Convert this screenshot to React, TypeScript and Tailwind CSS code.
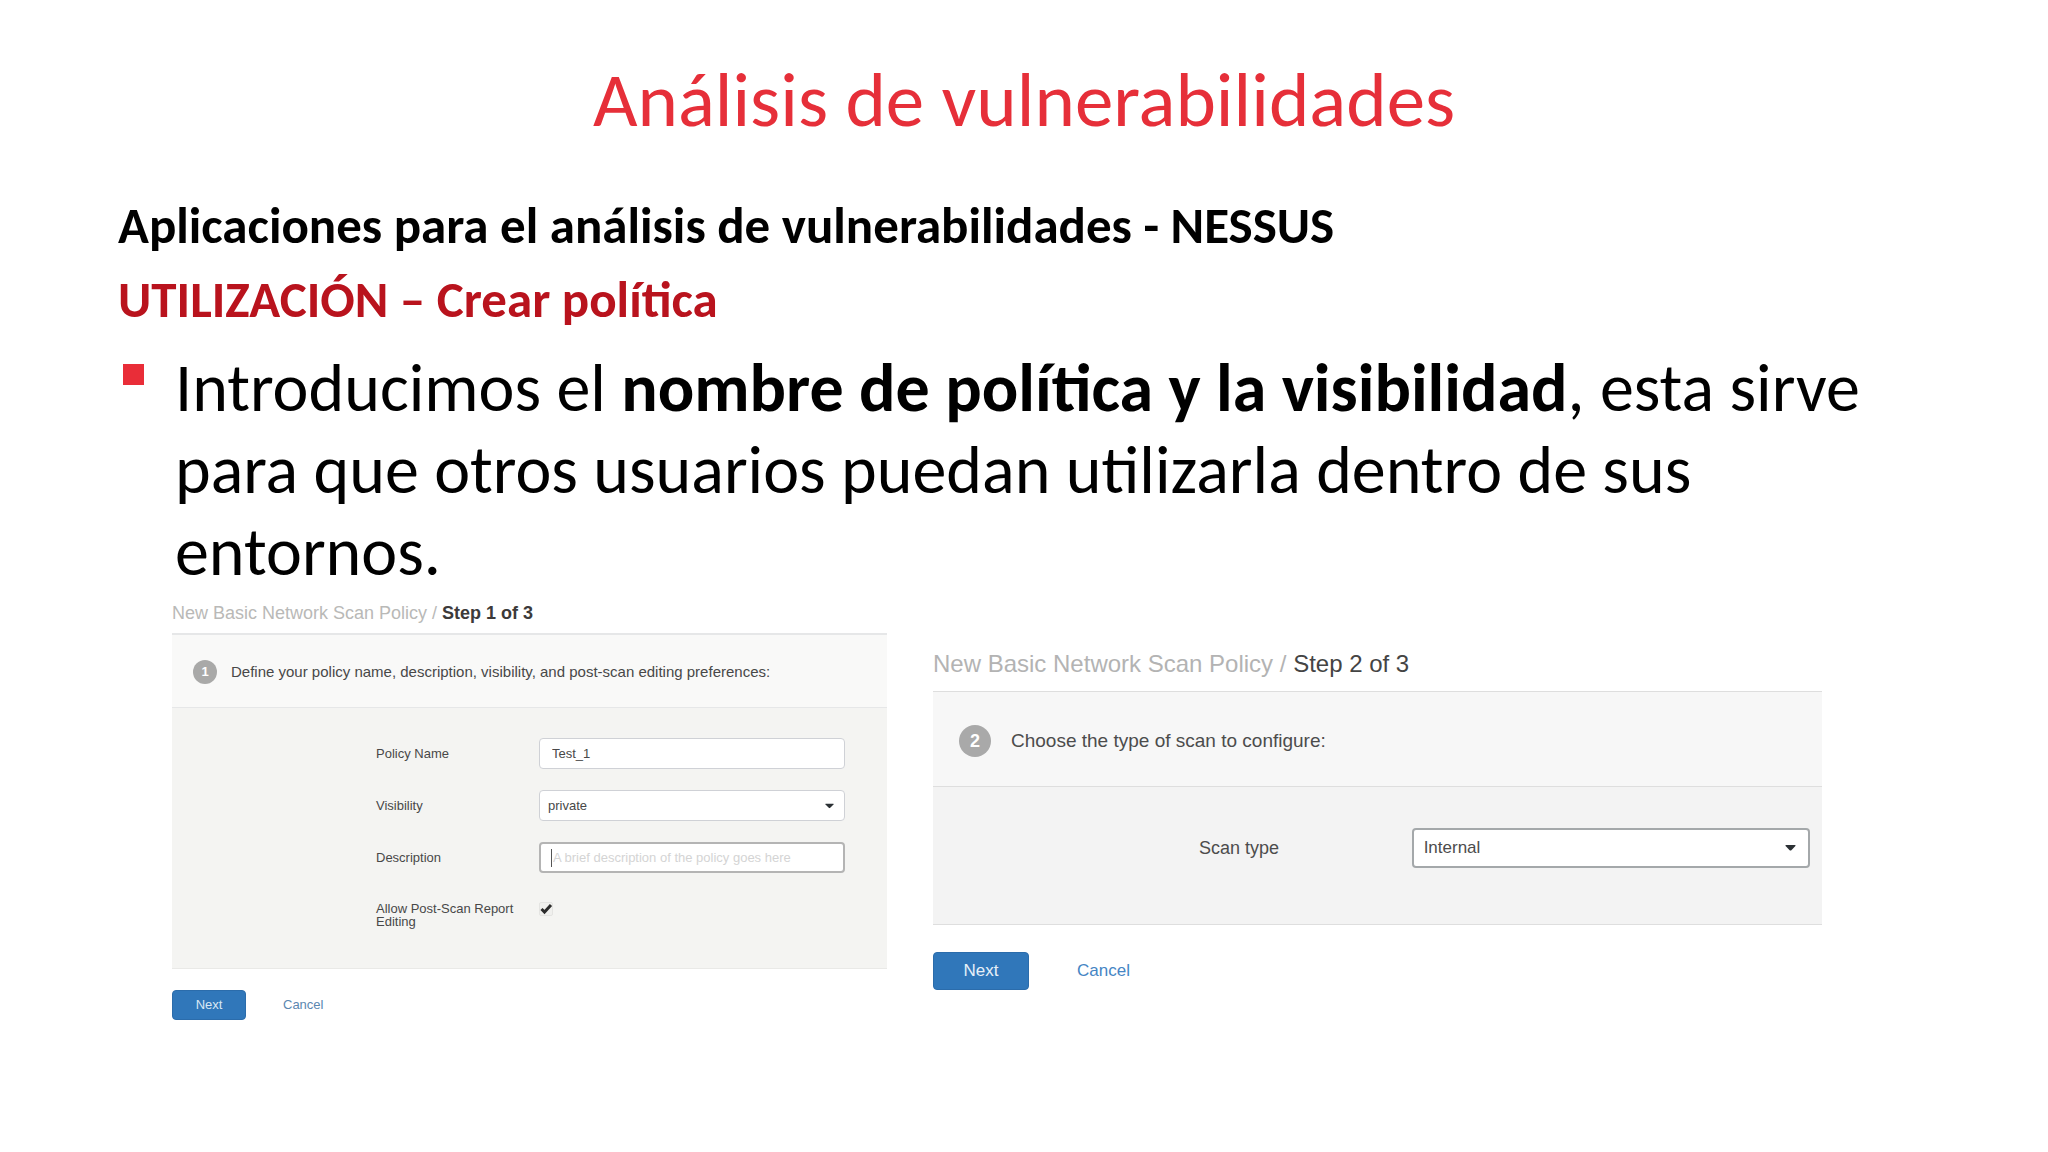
import type { ReactNode } from 'react';

interface PolicyPanelProps {
  step: number;
  heading: ReactNode;
  className: string;
  children: ReactNode;
}

const Caret = ({ className }: { className: string }) => (
  <svg viewBox="0 0 12 7" className={`pointer-events-none absolute top-1/2 -translate-y-1/2 ${className}`} aria-hidden="true">
    <path d="M0 1Q0 0 1 0H11Q12 0 12 1L7 6Q6 7 5 6Z" fill="#2b3034" />
  </svg>
);

const PolicyPanel = ({ step, heading, className, children }: PolicyPanelProps) => (
  <form className={className} onSubmit={(e) => e.preventDefault()} aria-label={`Step ${step} of 3`}>
    {heading}
    {children}
  </form>
);

const StepOne = () => (
  <PolicyPanel
    step={1}
    className="text-[13px] text-[#484848]"
    heading={
      <h2 className="h-[34px] pt-1 text-[18px] leading-5 whitespace-nowrap text-[#b9b9b7]">
        New Basic Network Scan Policy / <span className="font-bold text-[#3c3a3a]">Step 1 of 3</span>
      </h2>
    }
  >
    <div className="flex h-[75px] items-center gap-[14px] border-y border-t-2 border-[#e6e7e8] bg-[#f9f9f8] pt-[2px] pl-[21px]">
      <span className="flex size-6 items-center justify-center rounded-full bg-[#a9a9a8] text-[13px] font-bold text-white">1</span>
      <p className="text-[15px] whitespace-nowrap">Define your policy name, description, visibility, and post-scan editing preferences:</p>
    </div>
    <div className="grid grid-cols-[163fr_306fr] items-center gap-y-[21px] border-b border-[#e9e9e7] bg-[#f4f4f2] pt-[30px] pr-[42px] pb-10 pl-[204px]">
      <label htmlFor="policy-name">Policy Name</label>
      <input id="policy-name" type="text" defaultValue="Test_1" className="h-[31px] w-full rounded-sm border border-[#cfd1d6] bg-white px-3 outline-none" />

      <label htmlFor="visibility">Visibility</label>
      <div className="relative">
        <select id="visibility" defaultValue="private" className="block h-[31px] w-full appearance-none rounded-sm border border-[#cfd1d6] bg-white px-2 outline-none">
          <option value="private">private</option>
          <option value="shared">shared</option>
        </select>
        <Caret className="right-[11px] h-[5px] w-[9px]" />
      </div>

      <label htmlFor="description">Description</label>
      <div className="relative">
        <input
          id="description"
          type="text"
          placeholder="A brief description of the policy goes here"
          className="block h-[31px] w-full rounded-sm border-2 border-[#b4b4b4] bg-white px-3 outline-none placeholder:text-[#d4d4d4]"
        />
        <span className="absolute top-[7px] left-3 h-[18px] w-px bg-[#555]" />
      </div>

      <label htmlFor="post-scan" className="self-start pt-2 leading-[13px]">
        Allow Post-Scan Report
        <br />
        Editing
      </label>
      <div className="relative mt-2 size-[14px] self-start">
        <input id="post-scan" type="checkbox" defaultChecked className="block size-[14px] appearance-none rounded-xs border border-[#e4e4e2] bg-[#f0f0ee]" />
        <svg viewBox="0 0 14 14" className="pointer-events-none absolute inset-0 size-[14px]" aria-hidden="true">
          <path d="M2.5 7L5.5 10L12 3" fill="none" stroke="#2c2c2c" strokeWidth="3" />
        </svg>
      </div>
    </div>
    <div className="mt-[21px] flex items-center gap-[37px]">
      <button type="submit" className="h-[30px] w-[74px] rounded-sm border border-[#2b6cab] bg-[#3077ba] text-[#d9e7f4]">Next</button>
      <a href="#cancel" className="text-[#5b87b0]">Cancel</a>
    </div>
  </PolicyPanel>
);

const StepTwo = () => (
  <PolicyPanel
    step={2}
    className="mt-[51px] text-[17px] text-[#4c4c4c]"
    heading={
      <h2 className="h-[41px] text-[24px] leading-7 whitespace-nowrap text-[#b3b3b3]">
        New Basic Network Scan Policy / <span className="text-[#444]">Step 2 of 3</span>
      </h2>
    }
  >
    <div className="flex h-[96px] items-center gap-5 border-y border-[#dedede] bg-[#f7f7f7] pt-1 pl-[26px]">
      <span className="flex size-8 items-center justify-center rounded-full bg-[#a9a9a9] text-[18px] font-bold text-white">2</span>
      <p className="text-[19px] whitespace-nowrap">Choose the type of scan to configure:</p>
    </div>
    <div className="grid grid-cols-[213fr_399fr] items-center border-b border-[#dedede] bg-[#f3f3f3] pt-[41px] pr-[12px] pb-[56px] pl-[266px]">
      <label htmlFor="scan-type" className="text-[18px]">Scan type</label>
      <div className="relative">
        <select id="scan-type" defaultValue="internal" className="block h-10 w-full appearance-none rounded-sm border-2 border-[#a4a8aa] bg-white px-[10px] outline-none">
          <option value="internal">Internal</option>
          <option value="external">External</option>
        </select>
        <Caret className="right-[14px] h-[6px] w-[11px]" />
      </div>
    </div>
    <div className="mt-[27px] flex items-center gap-[48px]">
      <button type="submit" className="h-[38px] w-24 rounded-sm border border-[#2b6cab] bg-[#3077ba] text-[#e6f0f8]">Next</button>
      <a href="#cancel" className="text-[#4585c4]">Cancel</a>
    </div>
  </PolicyPanel>
);

const App = () => (
  <main className="min-h-screen bg-white px-[118px] pt-[57px] pb-20 font-['Carlito','Lato',sans-serif] text-black">
    <h1 className="text-center text-[77px] leading-[86px] text-[#e62f39]">Análisis de vulnerabilidades</h1>
    <p className="mt-[46px] text-[51px] leading-[74px] font-bold">Aplicaciones para el análisis de vulnerabilidades - NESSUS</p>
    <p className="text-[51px] leading-[74px] font-bold text-[#b9131d]">UTILIZACIÓN – Crear política</p>
    <ul className="mt-[10px]">
      <li className="flex text-[68px] leading-[82px]">
        <span className="mt-[17px] mr-[31px] ml-[5px] size-[21px] shrink-0 bg-[#e92d38]" />
        <p>
          Introducimos el <strong>nombre de política y la visibilidad</strong>, esta sirve para que otros usuarios puedan utilizarla dentro de sus entornos.
        </p>
      </li>
    </ul>
    <div className="mt-[6px] mr-[108px] ml-[54px] grid grid-cols-[715fr_889fr] items-start gap-[46px] font-['Liberation_Sans',Arial,sans-serif]">
      <StepOne />
      <StepTwo />
    </div>
  </main>
);

export default App;
